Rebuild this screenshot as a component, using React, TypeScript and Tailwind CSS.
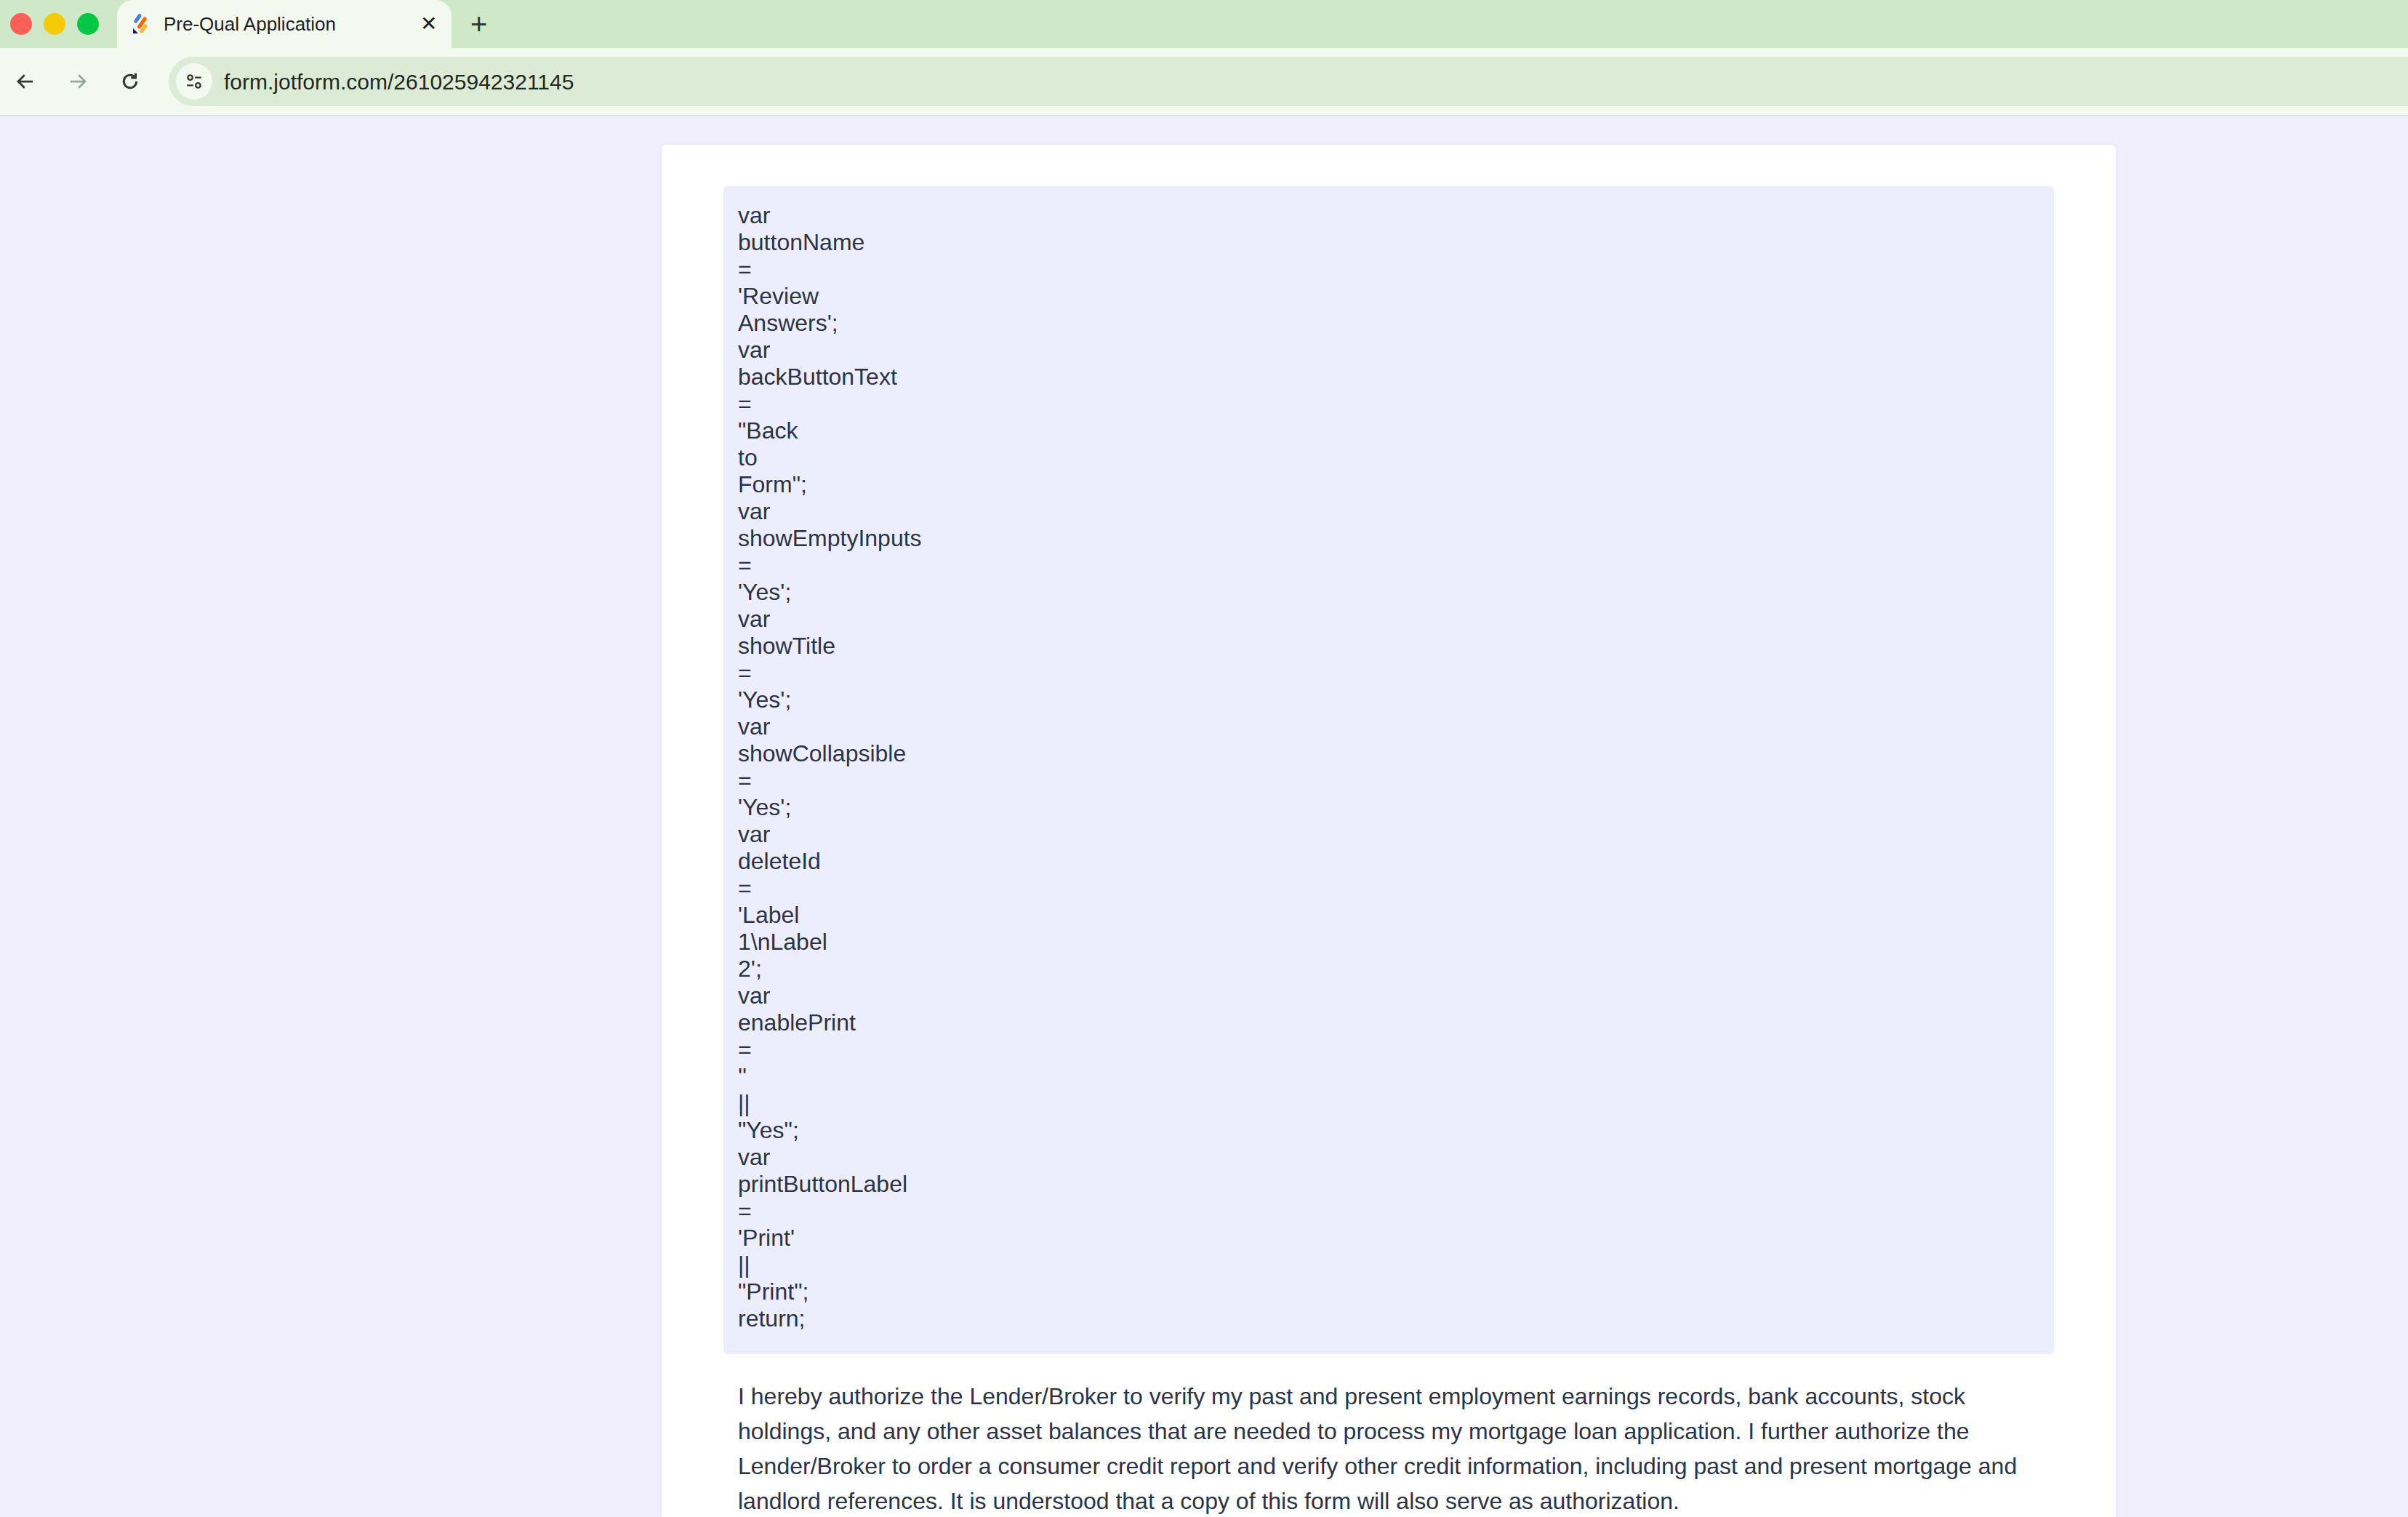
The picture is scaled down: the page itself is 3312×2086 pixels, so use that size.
import React from "react";

const lines = [
  "var","buttonName","=","'Review","Answers';","var","backButtonText","=","\"Back","to","Form\";","var","showEmptyInputs","=","'Yes';","var","showTitle","=","'Yes';","var","showCollapsible","=","'Yes';","var","deleteId","=","'Label","1\\nLabel","2';","var","enablePrint","=","''","||","\"Yes\";","var","printButtonLabel","=","'Print'","||","\"Print\";","return;",
];

export default function App() {
  return (
    <div className="w-[3312px] h-[2086px] overflow-hidden flex flex-col bg-[#f2effd]" style={{ fontFamily: '"Liberation Sans", Arial, sans-serif' }}>
      {/* tab strip */}
      <div className="h-[66px] bg-[#cfe8c8] flex items-end shrink-0">
        <div className="flex items-center gap-[16px] pl-[14px] h-[66px]">
          <div className="w-[30px] h-[30px] rounded-full bg-[#fe5f57]" />
          <div className="w-[30px] h-[30px] rounded-full bg-[#f3cb05]" />
          <div className="w-[30px] h-[30px] rounded-full bg-[#03c843]" />
        </div>
        <div className="ml-[25px] w-[460px] h-[66px] bg-[#f3f9ee] rounded-t-[22px] flex items-center px-[20px]">
          <svg width="24" height="30" viewBox="0 0 24 30">
            <rect x="6" y="0" width="5" height="14" rx="2.5" transform="rotate(35 8 7)" fill="#4a7cf2" />
            <rect x="12" y="4" width="5" height="18" rx="2.5" transform="rotate(35 14 13)" fill="#ff6100" />
            <rect x="14" y="14" width="5" height="14" rx="2.5" transform="rotate(35 16 21)" fill="#ffb629" />
            <path d="M2 21 L2 28 L9 28 Z" fill="#0a1551" />
          </svg>
          <span className="ml-[20px] text-[26px] text-[#1f1f1f]">Pre-Qual Application</span>
          <span className="ml-auto text-[28px] text-[#1f1f1f]">✕</span>
        </div>
        <div className="ml-[26px] h-[66px] flex items-center text-[40px] font-light text-[#2f3b2f]">+</div>
      </div>
      {/* address row */}
      <div className="h-[94px] bg-[#f3f9ee] border-b-[2px] border-[#dfe3dc] flex items-center shrink-0">
        <div className="flex items-center gap-[42px] pl-[20px] text-[#2f3b2f]">
          <svg width="30" height="30" viewBox="0 0 24 24" fill="none" stroke="#2f3b2f" strokeWidth="2.2"><path d="M20 12H4M11 5l-7 7 7 7" /></svg>
          <svg width="30" height="30" viewBox="0 0 24 24" fill="none" stroke="#9aa59a" strokeWidth="2.2"><path d="M4 12h16M13 5l7 7-7 7" /></svg>
          <svg width="30" height="30" viewBox="0 0 24 24" fill="none" stroke="#2f3b2f" strokeWidth="2.4"><path d="M19 12a7 7 0 1 1-2.5-5.4" /><path d="M18 3v5h-5" /></svg>
        </div>
        <div className="ml-[38px] flex-1 h-[68px] bg-[#dcebd6] rounded-l-[34px] flex items-center pl-[10px]">
          <div className="w-[50px] h-[50px] rounded-full bg-[#f3f9ee] flex items-center justify-center">
            <svg width="26" height="26" viewBox="0 0 24 24" fill="none" stroke="#2f3b2f" strokeWidth="2.2"><circle cx="7" cy="7" r="3" /><path d="M13 7h8M3 17h8" /><circle cx="17" cy="17" r="3" /></svg>
          </div>
          <span className="ml-[16px] text-[30px] text-[#1f2a1f]">form.jotform.com/261025942321145</span>
        </div>
      </div>
      {/* page */}
      <div className="flex-1 flex pt-[39px] pl-[910px]">
        <div className="w-[2000px] bg-white rounded-t-[6px] shadow-[0_0_6px_rgba(0,0,0,0.05)] px-[85px] pt-[57px]">
          <div className="bg-[#edeefd] rounded-[6px] px-[20px] pt-[22px] pb-[30px] text-[32px] leading-[37px] text-[#2c3345]">
            {lines.map((l, i) => <div key={i}>{l}</div>)}
          </div>
          <p className="mt-[34px] px-[20px] text-[32px] leading-[48px] text-[#2c3345]">
            I hereby authorize the Lender/Broker to verify my past and present employment earnings records, bank accounts, stock holdings, and any other asset balances that are needed to process my mortgage loan application. I further authorize the Lender/Broker to order a consumer credit report and verify other credit information, including past and present mortgage and landlord references. It is understood that a copy of this form will also serve as authorization.
          </p>
        </div>
      </div>
    </div>
  );
}
